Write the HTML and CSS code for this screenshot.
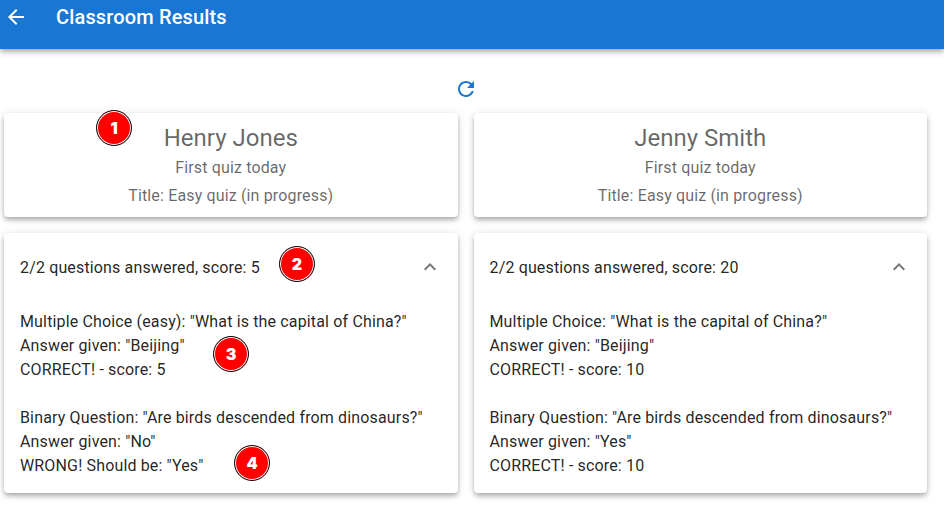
FILE: index.html
```html
<!DOCTYPE html>
<html lang="en">
<head>
<meta charset="utf-8">
<title>Classroom Results</title>
<link rel="stylesheet" href="styles.css">
</head>
<body>
<header class="app-bar">
  <svg class="icon" viewBox="0 0 24 24"><path d="M20 11H7.83l5.59-5.59L12 4l-8 8 8 8 1.41-1.41L7.83 13H20v-2z"/></svg>
  <h1 class="title">Classroom Results</h1>
</header>
<main>
  <div class="toolbar">
    <svg class="icon" viewBox="0 0 24 24"><path d="M17.65 6.35C16.2 4.9 14.21 4 12 4c-4.42 0-7.99 3.58-7.99 8s3.57 8 7.99 8c3.73 0 6.84-2.55 7.73-6h-2.08c-.82 2.33-3.04 4-5.65 4-3.31 0-6-2.69-6-6s2.69-6 6-6c1.66 0 3.14.69 4.22 1.78L13 11h7V4l-2.35 2.35z"/></svg>
  </div>
  <div class="grid">
    <section class="student">
      <div class="card summary">
        <h2 class="name">Henry Jones</h2>
        <p>First quiz today</p>
        <p>Title: Easy quiz (in progress)</p>
        <span class="badge badge-1">1</span>
      </div>
      <div class="card results">
        <div class="results-head">
          <span>2/2 questions answered, score: 5</span>
          <svg class="icon" viewBox="0 0 24 24"><path d="M12 8l-6 6 1.41 1.41L12 10.83l4.59 4.58L18 14z"/></svg>
        </div>
        <div class="answer">
          <p>Multiple Choice (easy): "What is the capital of China?"</p>
          <p>Answer given: "Beijing"</p>
          <p>CORRECT! - score: 5</p>
        </div>
        <div class="answer">
          <p>Binary Question: "Are birds descended from dinosaurs?"</p>
          <p>Answer given: "No"</p>
          <p>WRONG! Should be: "Yes"</p>
        </div>
        <span class="badge badge-2">2</span>
        <span class="badge badge-3">3</span>
        <span class="badge badge-4">4</span>
      </div>
    </section>
    <section class="student">
      <div class="card summary">
        <h2 class="name">Jenny Smith</h2>
        <p>First quiz today</p>
        <p>Title: Easy quiz (in progress)</p>
      </div>
      <div class="card results">
        <div class="results-head">
          <span>2/2 questions answered, score: 20</span>
          <svg class="icon" viewBox="0 0 24 24"><path d="M12 8l-6 6 1.41 1.41L12 10.83l4.59 4.58L18 14z"/></svg>
        </div>
        <div class="answer">
          <p>Multiple Choice: "What is the capital of China?"</p>
          <p>Answer given: "Beijing"</p>
          <p>CORRECT! - score: 10</p>
        </div>
        <div class="answer">
          <p>Binary Question: "Are birds descended from dinosaurs?"</p>
          <p>Answer given: "Yes"</p>
          <p>CORRECT! - score: 10</p>
        </div>
      </div>
    </section>
  </div>
</main>
</body>
</html>
```

FILE: styles.css
```css
* { box-sizing: border-box; }
body {
  min-height: 100vh;
  margin: 0;
  background: #fff;
  color: rgba(0, 0, 0, 0.87);
  font: 400 16px/24px Roboto, sans-serif;
  letter-spacing: 0.00938em;
}
h1, h2, p { margin: 0; }
.icon { display: block; width: 24px; height: 24px; fill: currentColor; flex: none; }
.app-bar {
  display: flex;
  align-items: flex-start;
  gap: 28px;
  height: 49px;
  padding: 5px 4px 0;
  background: #1976d2;
  color: #fff;
  box-shadow: 0 2px 4px -1px rgba(0,0,0,.2), 0 4px 5px 0 rgba(0,0,0,.14), 0 1px 10px 0 rgba(0,0,0,.12);
}
.title { font-size: 20px; font-weight: 500; line-height: 24px; letter-spacing: 0.0075em; }
.toolbar {
  display: flex;
  justify-content: center;
  padding: 28px 12px 12px 0;
  color: #1976d2;
}
.grid {
  display: grid;
  grid-template-columns: 1fr 1fr;
  gap: 16px;
  padding: 0 17px 0 4px;
}
.student { display: flex; flex-direction: column; gap: 16px; }
.card {
  position: relative;
  border-radius: 4px;
  background: #fff;
  box-shadow: 0 2px 4px -1px rgba(0,0,0,.2), 0 4px 5px 0 rgba(0,0,0,.14), 0 1px 10px 0 rgba(0,0,0,.12);
}
.summary { height: 104px; padding-top: 9px; text-align: center; color: rgba(0,0,0,.6); }
.summary p { margin-bottom: 4px; }
.name { margin-bottom: 2px; font-size: 24px; font-weight: 400; line-height: 32px; letter-spacing: 0; }
.results { height: 260px; padding: 0 16px; }
.results-head { display: flex; align-items: center; justify-content: space-between; height: 68px; margin-bottom: 9px; }
.results-head span { padding-top: 2px; }
.results-head .icon { color: rgba(0,0,0,.54); }
.answer { margin-bottom: 24px; }
.badge {
  position: absolute;
  display: flex;
  align-items: center;
  justify-content: center;
  width: 36px;
  height: 36px;
  border: 1px solid #111;
  border-radius: 50%;
  background: #f00;
  box-shadow: inset 0 0 0 1px #fff;
  color: #fff;
  font: 900 16px/1 Inter, sans-serif;
  letter-spacing: 0;
}
.badge-1 { left: 92px; top: -3px; }
.badge-2 { left: 275px; top: 13px; }
.badge-3 { left: 209px; top: 103px; }
.badge-4 { left: 230px; top: 212px; }
```
